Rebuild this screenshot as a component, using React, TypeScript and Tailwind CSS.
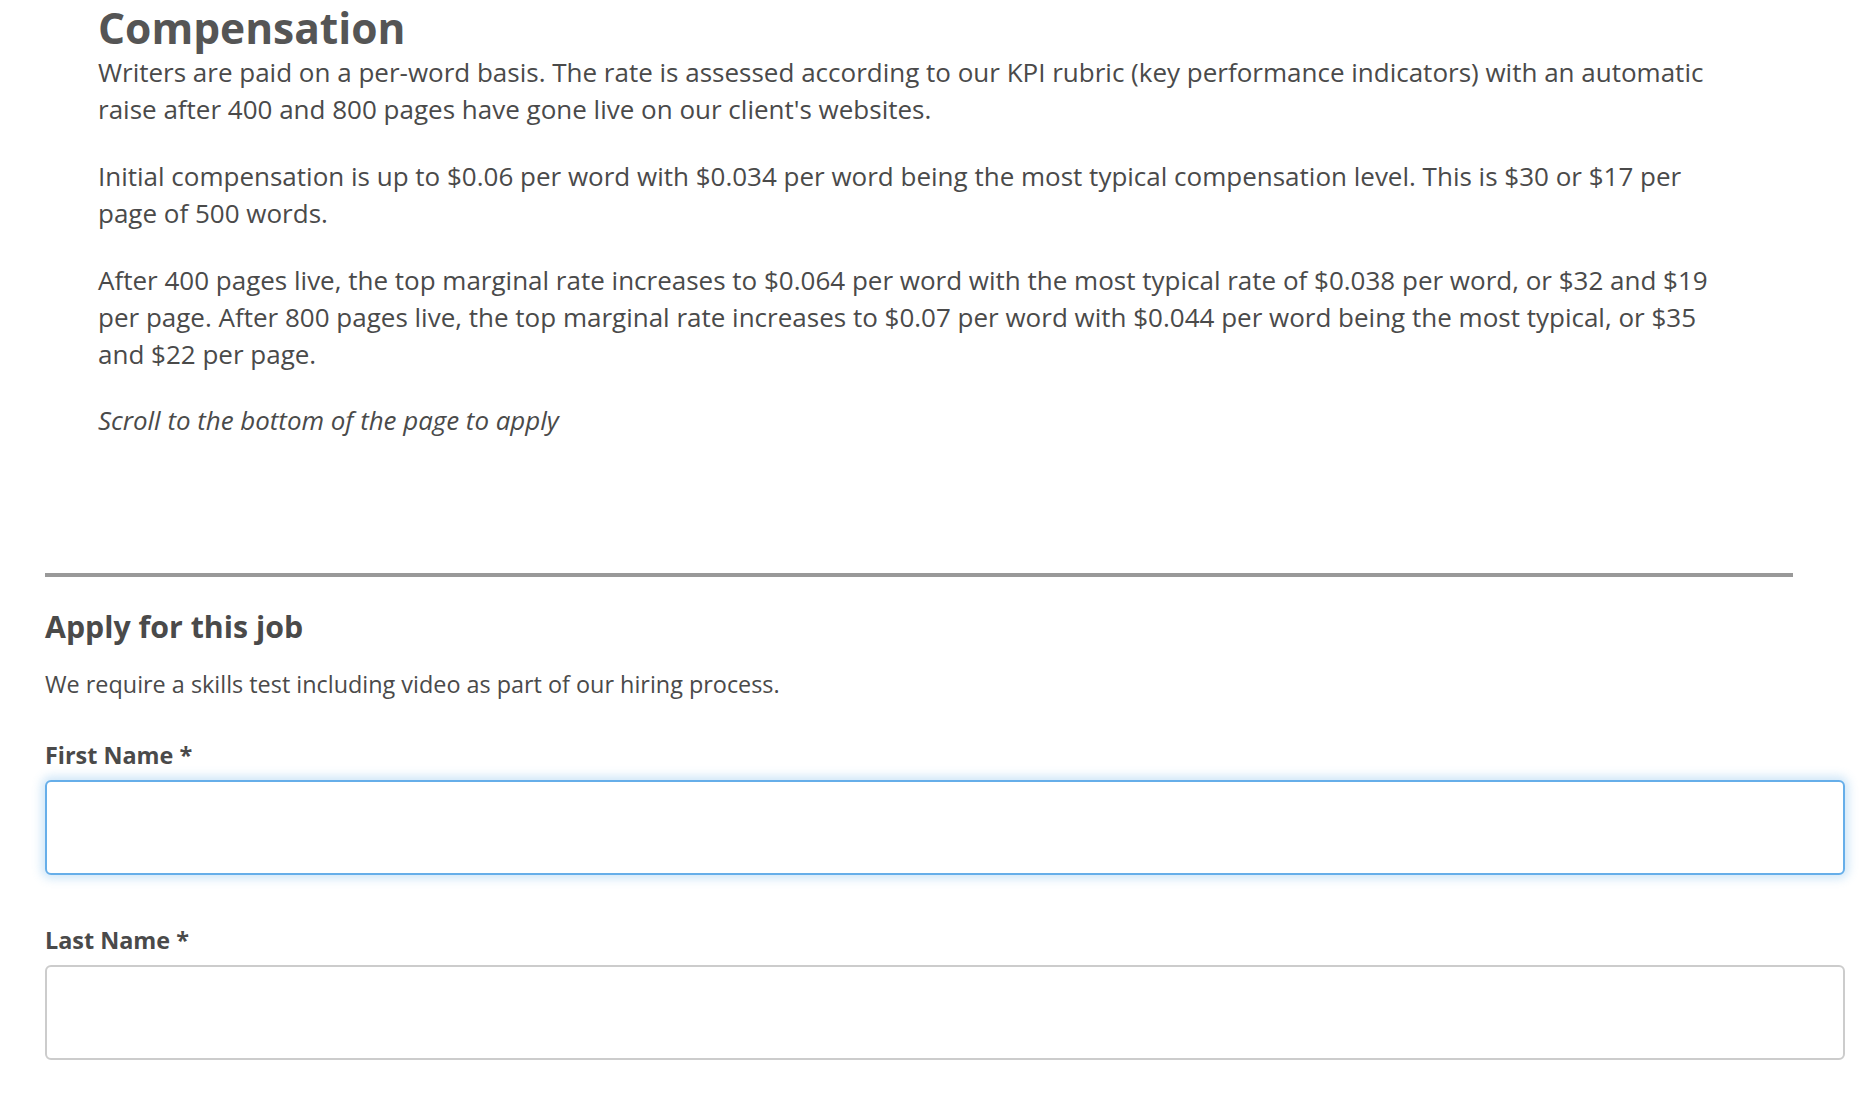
import React from "react";

export default function App() {
  return (
    <div className="w-[1872px] h-[1106px] overflow-hidden bg-white font-['Open_Sans',sans-serif] text-[#4a4a4a]">
      <div className="ml-[98px] w-[1625px] pt-[2px]">
        <h1 className="text-[42.5px] font-bold leading-[52px] text-[#555555]">Compensation</h1>
        <p className="text-[26px] leading-[37px]">
          Writers are paid on a per-word basis. The rate is assessed according to our KPI rubric (key performance indicators) with an automatic raise after 400 and 800 pages have gone live on our client's websites.
        </p>
        <p className="text-[26px] leading-[37px] mt-[30px]">
          Initial compensation is up to $0.06 per word with $0.034 per word being the most typical compensation level. This is $30 or $17 per page of 500 words.
        </p>
        <p className="text-[26px] leading-[37px] mt-[30px]">
          After 400 pages live, the top marginal rate increases to $0.064 per word with the most typical rate of $0.038 per word, or $32 and $19 per page. After 800 pages live, the top marginal rate increases to $0.07 per word with $0.044 per word being the most typical, or $35 and $22 per page.
        </p>
        <p className="text-[25.9px] leading-[37px] mt-[29px] italic">Scroll to the bottom of the page to apply</p>
      </div>
      <div className="ml-[45px] mt-[134px] w-[1748px] h-[4px] bg-[#999999]" />
      <div className="ml-[45px] w-[1800px]">
        <h2 className="mt-[30px] text-[30.3px] font-bold leading-[40px] text-[#4a4a4a]">Apply for this job</h2>
        <p className="mt-[21px] text-[23.4px] leading-[32px]">We require a skills test including video as part of our hiring process.</p>
        <label className="block mt-[39px] text-[23.4px] font-bold leading-[32px]">First Name *</label>
        <div className="mt-[9px] h-[95px] rounded-[6px] border-2 border-[#66aee9] bg-white shadow-[0_0_10px_4px_rgba(102,174,233,0.3)]" />
        <label className="block mt-[49px] text-[23.4px] font-bold leading-[32px]">Last Name *</label>
        <div className="mt-[9px] h-[95px] rounded-[6px] border-2 border-[#cccccc] bg-white" />
      </div>
    </div>
  );
}
